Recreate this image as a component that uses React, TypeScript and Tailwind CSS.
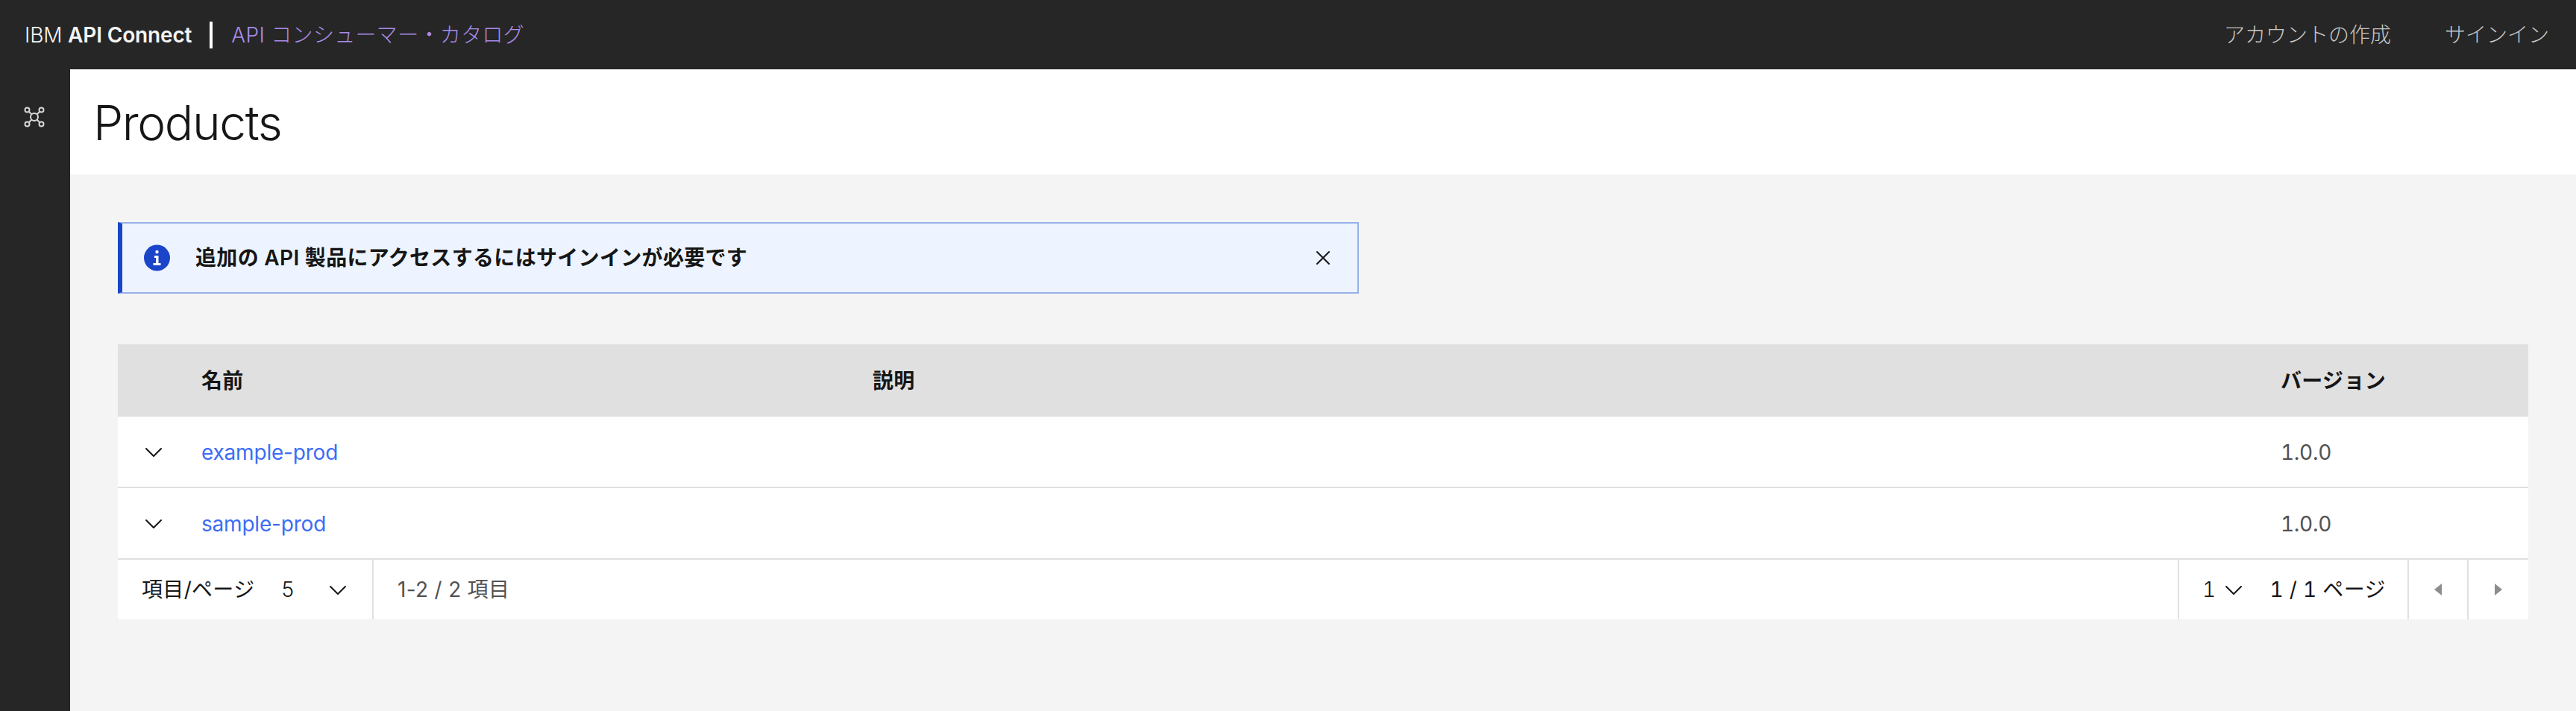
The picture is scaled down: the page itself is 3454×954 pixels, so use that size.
import { ChevronDown, X } from "lucide-react";

const font = "font-['Inter','Noto_Sans_CJK_JP',sans-serif]";

const rows = [
  { name: "example-prod", version: "1.0.0" },
  { name: "sample-prod", version: "1.0.0" },
];

const NetworkIcon = () => (
  <svg width="28" height="28" viewBox="0 0 28 28" fill="none" stroke="#d6d6d6" strokeWidth="2">
    <circle cx="14" cy="14" r="5" />
    <circle cx="4.5" cy="4.5" r="3" />
    <circle cx="23.5" cy="4.5" r="3" />
    <circle cx="4.5" cy="23.5" r="3" />
    <circle cx="23.5" cy="23.5" r="3" />
    <path d="M6.7 6.7 10.5 10.5M21.3 6.7 17.5 10.5M6.7 21.3 10.5 17.5M21.3 21.3 17.5 17.5" />
  </svg>
);

const InfoIcon = () => (
  <svg width="35" height="36" viewBox="0 0 35 36">
    <circle cx="17.5" cy="18" r="17.5" fill="#1a45c8" />
    <circle cx="17.5" cy="10" r="2.2" fill="#fff" />
    <path d="M14 15h5.5v10h3v3h-10v-3h3.5v-7H14z" fill="#fff" />
  </svg>
);

export default function App() {
  return (
    <div className={`${font} h-screen overflow-hidden flex flex-col bg-[#262626] text-[28px] text-[#161616] tracking-[0.32px]`}>
      {/* top bar */}
      <header className="h-[93px] shrink-0 flex items-center pl-[33px] pr-[36px] text-[#f4f4f4]">
        <span className="font-light tracking-[-0.15px]">IBM <span className="font-semibold">API Connect</span></span>
        <span className="w-[4px] h-[36px] bg-white ml-[24px] mr-[25px]" />
        <span className="text-[#a98ce8] font-light">API コンシューマー・カタログ</span>
        <nav className="ml-auto flex gap-[72px] font-light text-[#c6c6c6] tracking-normal">
          <a>アカウントの作成</a>
          <a>サインイン</a>
        </nav>
      </header>

      <div className="flex-1 flex min-h-0">
        {/* side rail */}
        <aside className="w-[94px] shrink-0 flex justify-center pt-[50px] pr-[2px]">
          <div>
            <NetworkIcon />
          </div>
        </aside>

        <main className="flex-1 bg-[#f4f4f4]">
          <div className="bg-white h-[141px] flex items-center pl-[31px] pt-[2px]">
            <h1 className="text-[64px] font-light leading-none tracking-[-1.4px]">Products</h1>
          </div>

          <div className="pt-[64px] pl-[64px] pr-[64px]">
            {/* notification */}
            <div className="w-[1664px] h-[96px] flex items-center bg-[#edf4ff] border-2 border-l-[6px] border-[#97b0e8] border-l-[#1a45c8] pl-[29px] pr-[30px]">
              <InfoIcon />
              <span className="ml-[34px] font-semibold">追加の API 製品にアクセスするにはサインインが必要です</span>
              <X className="ml-auto" size={32} strokeWidth={1.5} />
            </div>

            {/* table */}
            <div className="mt-[68px] bg-white">
              <div className="grid grid-cols-[112px_900px_1888px_1fr] h-[97px] items-center bg-[#e0e0e0] font-semibold">
                <span />
                <span>名前</span>
                <span>説明</span>
                <span>バージョン</span>
              </div>
              {rows.map((row) => (
                <div key={row.name} className="grid grid-cols-[112px_900px_1888px_1fr] h-[96px] pt-[2px] items-center border-b-2 border-[#e0e0e0]">
                  <ChevronDown className="ml-[28px]" size={40} strokeWidth={1.2} />
                  <a className="text-[#3d6df5] tracking-[-0.2px]">{row.name}</a>
                  <span />
                  <span className="text-[#525252] tracking-[-0.3px] tabular-nums">{row.version}</span>
                </div>
              ))}

              {/* pagination */}
              <div className="flex h-[80px] items-center">
                <div className="w-[343px] h-full flex items-center pl-[32px] border-r-2 border-[#e0e0e0]">
                  <span>項目/ページ</span>
                  <span className="ml-[36px] font-light">5</span>
                  <ChevronDown className="ml-[39px] mt-[2px]" size={40} strokeWidth={1.2} />
                </div>
                <span className="ml-[32px] text-[#525252]">1-2 / 2 項目</span>
                <div className="ml-auto w-[308px] h-full flex items-center pl-[31px] border-l-2 border-[#e0e0e0]">
                  <span className="font-light tabular-nums">1</span>
                  <ChevronDown className="ml-[4px] mt-[2px]" size={40} strokeWidth={1.2} />
                  <span className="ml-[28px] tabular-nums">1 / 1 ページ</span>
                </div>
                <div className="w-[80px] h-full flex items-center justify-center border-l-2 border-[#e0e0e0]">
                  <span className="border-y-[8px] border-r-[10px] border-y-transparent border-r-[#8d8d8d]" />
                </div>
                <div className="w-[82px] h-full flex items-center justify-center border-l-2 border-[#e0e0e0]">
                  <span className="border-y-[8px] border-l-[10px] border-y-transparent border-l-[#8d8d8d]" />
                </div>
              </div>
            </div>
          </div>
        </main>
      </div>
    </div>
  );
}
